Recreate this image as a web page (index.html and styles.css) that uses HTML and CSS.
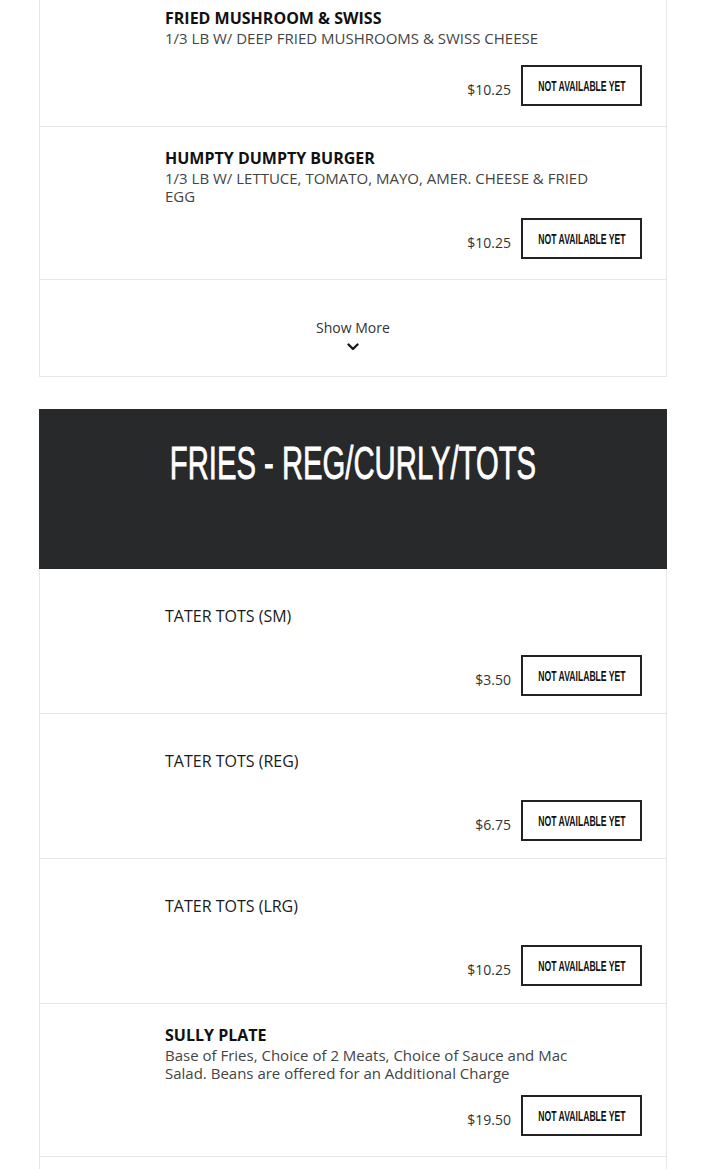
FILE: index.html
```html
<!DOCTYPE html>
<html lang="en">
<head>
<meta charset="utf-8">
<title>Menu</title>
<link rel="stylesheet" href="styles.css">
</head>
<body>
<div class="page">
  <section class="panel">
    <article class="item">
      <div class="info">
        <h3 class="name name-bold">FRIED MUSHROOM &amp; SWISS</h3>
        <p class="desc">1/3 LB W/ DEEP FRIED MUSHROOMS &amp; SWISS CHEESE</p>
      </div>
      <div class="buy"><span class="price">$10.25</span><button class="btn" type="button"><span>NOT AVAILABLE YET</span></button></div>
    </article>
    <article class="item">
      <div class="info">
        <h3 class="name name-bold">HUMPTY DUMPTY BURGER</h3>
        <p class="desc">1/3 LB W/ LETTUCE, TOMATO, MAYO, AMER. CHEESE &amp; FRIED EGG</p>
      </div>
      <div class="buy"><span class="price">$10.25</span><button class="btn" type="button"><span>NOT AVAILABLE YET</span></button></div>
    </article>
    <div class="show-more">
      <span>Show More</span>
      <svg class="chevron" width="12" height="8" viewBox="0 0 12 8" aria-hidden="true"><polyline points="1.5,1.5 6,6 10.5,1.5" fill="none" stroke="#1a1a1a" stroke-width="2.4" stroke-linecap="round" stroke-linejoin="round"/></svg>
    </div>
  </section>

  <section class="category">
    <header class="banner"><h2 class="banner-title"><span>FRIES - REG/CURLY/TOTS</span></h2></header>
    <div class="panel panel-open">
      <article class="item item-plain">
        <div class="info"><h3 class="name">TATER TOTS (SM)</h3></div>
        <div class="buy"><span class="price">$3.50</span><button class="btn" type="button"><span>NOT AVAILABLE YET</span></button></div>
      </article>
      <article class="item item-plain">
        <div class="info"><h3 class="name">TATER TOTS (REG)</h3></div>
        <div class="buy"><span class="price">$6.75</span><button class="btn" type="button"><span>NOT AVAILABLE YET</span></button></div>
      </article>
      <article class="item item-plain">
        <div class="info"><h3 class="name">TATER TOTS (LRG)</h3></div>
        <div class="buy"><span class="price">$10.25</span><button class="btn" type="button"><span>NOT AVAILABLE YET</span></button></div>
      </article>
      <article class="item">
        <div class="info">
          <h3 class="name name-bold">SULLY PLATE</h3>
          <p class="desc">Base of Fries, Choice of 2 Meats, Choice of Sauce and Mac Salad. Beans are offered for an Additional Charge</p>
        </div>
        <div class="buy"><span class="price">$19.50</span><button class="btn" type="button"><span>NOT AVAILABLE YET</span></button></div>
      </article>
    </div>
  </section>
</div>
</body>
</html>
```

FILE: styles.css
```css
html, body {
  margin: 0;
  padding: 0;
  background: #ffffff;
}

body {
  font-family: "Open Sans", "Liberation Sans", sans-serif;
  color: #222;
}

.page {
  width: 628px;
  margin: -19px 0 0 39px;
  box-sizing: border-box;
}

.panel {
  border: 1px solid #e6e6e6;
}

.panel-open {
  border-top: none;
  border-bottom: none;
  padding-bottom: 30px;
}

.item {
  display: flex;
  flex-direction: column;
  padding: 20px 24px 20px 125px;
  border-bottom: 1px solid #e6e6e6;
}

.item-plain {
  padding-bottom: 17px;
}

.info {
  min-height: 50px;
  max-width: 436px;
  display: flex;
  flex-direction: column;
  justify-content: center;
}

.item-plain .info {
  min-height: 53px;
}

.name {
  margin: 0;
  font-size: 16px;
  line-height: 22px;
  font-weight: 400;
  color: #1a1a1a;
}

.name-bold {
  font-weight: 700;
  color: #111;
}

.desc {
  margin: 0;
  font-size: 15px;
  line-height: 18px;
  font-weight: 400;
  color: #444;
}

.buy {
  display: flex;
  justify-content: flex-end;
  align-items: center;
  gap: 10px;
  margin-top: 13px;
}

.price {
  font-size: 14px;
  line-height: 19px;
  padding-top: 7px;
  color: #333;
}

.btn {
  width: 121px;
  height: 41px;
  box-sizing: border-box;
  border: 2px solid #222;
  background: #fff;
  padding: 0;
  display: flex;
  align-items: center;
  justify-content: center;
  font-family: "Liberation Sans", "Arial", sans-serif;
  font-weight: 700;
  font-size: 15px;
  color: #111;
  overflow: hidden;
}

.btn span {
  display: inline-block;
  white-space: nowrap;
  transform: scaleX(0.574);
}

.show-more {
  display: flex;
  flex-direction: column;
  align-items: center;
  padding: 38px 0 25px;
  font-size: 14px;
  line-height: 19px;
  color: #333;
}

.chevron {
  display: block;
  margin-top: 6px;
}

.category {
  margin-top: 32px;
}

.banner {
  background: #27292b;
  height: 160px;
  box-sizing: border-box;
  padding-top: 26px;
  text-align: center;
}

.banner-title {
  margin: 0;
  font-family: "Liberation Sans", "Arial", sans-serif;
  font-weight: 400;
  font-size: 46px;
  line-height: 56px;
  color: #ffffff;
  white-space: nowrap;
  -webkit-text-stroke: 0.8px #ffffff;
}

.banner-title span {
  display: inline-block;
  transform: scaleX(0.636);
}
```
